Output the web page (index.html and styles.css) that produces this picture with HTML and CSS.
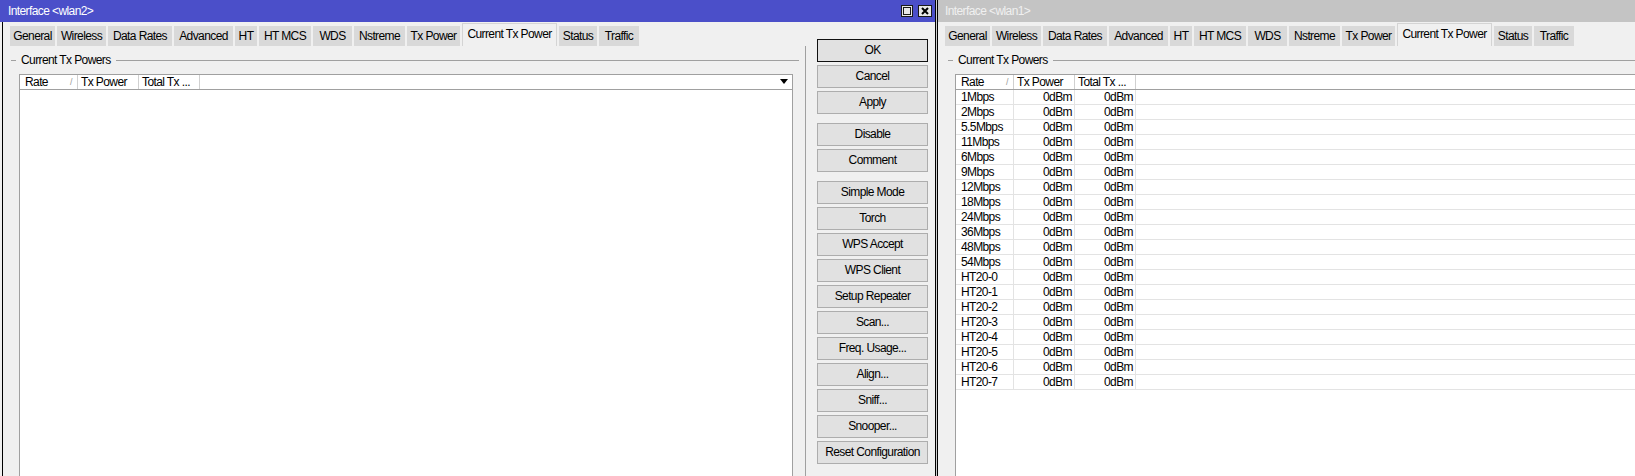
FILE: index.html
```html
<!DOCTYPE html>
<html>
<head>
<meta charset="utf-8">
<title>Interface</title>
<link rel="stylesheet" href="styles.css">
</head>
<body>
<div class="desk">
  <section class="win win-main">
    <header class="titlebar">
      <span class="title">Interface &lt;wlan2&gt;</span>
      <span class="wctl">
        <svg class="wbtn" width="12" height="12" viewBox="0 0 12 12"><rect x="0.5" y="0.5" width="11" height="11" fill="#e8e8e8" stroke="#1a1a1a"/><rect x="2.5" y="2.5" width="7" height="7" fill="none" stroke="#1a1a1a"/></svg>
        <svg class="wbtn" width="14" height="12" viewBox="0 0 14 12"><rect x="0.5" y="0.5" width="13" height="11" fill="#e8e8e8" stroke="#1a1a1a"/><path d="M4 3 L10 9 M10 3 L4 9" stroke="#000" stroke-width="2"/></svg>
      </span>
    </header>
    <div class="wbody">
      <div class="main">
        <nav class="tabs">
          <span class="tab t-gen">General</span>
          <span class="tab t-wir">Wireless</span>
          <span class="tab t-dr">Data Rates</span>
          <span class="tab t-adv">Advanced</span>
          <span class="tab t-ht">HT</span>
          <span class="tab t-mcs">HT MCS</span>
          <span class="tab t-wds">WDS</span>
          <span class="tab t-nst">Nstreme</span>
          <span class="tab t-txp">Tx Power</span>
          <span class="tab t-cur active">Current Tx Power</span>
          <span class="tab t-sta">Status</span>
          <span class="tab t-tra">Traffic</span>
        </nav>
        <div class="panel">
          <div class="group"><span class="dash"></span><span class="glabel">Current Tx Powers</span><span class="gline"></span></div>
          <div class="list">
            <div class="lrow lhead">
              <div class="cell c-rate">Rate<span class="sort">/</span></div>
              <div class="cell c-tx">Tx Power</div>
              <div class="cell c-tot">Total Tx ...</div>
              <div class="cell c-fill"><span class="dd"></span></div>
            </div>
          </div>
        </div>
      </div>
      <div class="buttons">
        <div class="btn def">OK</div>
        <div class="btn">Cancel</div>
        <div class="btn">Apply</div>
        <div class="btn sep">Disable</div>
        <div class="btn">Comment</div>
        <div class="btn sep">Simple Mode</div>
        <div class="btn">Torch</div>
        <div class="btn">WPS Accept</div>
        <div class="btn">WPS Client</div>
        <div class="btn">Setup Repeater</div>
        <div class="btn">Scan...</div>
        <div class="btn">Freq. Usage...</div>
        <div class="btn">Align...</div>
        <div class="btn">Sniff...</div>
        <div class="btn">Snooper...</div>
        <div class="btn">Reset Configuration</div>
      </div>
    </div>
  </section>
  <div class="win-gap"></div>
  <section class="win win-side">
    <header class="titlebar">
      <span class="title">Interface &lt;wlan1&gt;</span>
    </header>
    <div class="wbody">
      <div class="main">
        <nav class="tabs">
          <span class="tab t-gen">General</span>
          <span class="tab t-wir">Wireless</span>
          <span class="tab t-dr">Data Rates</span>
          <span class="tab t-adv">Advanced</span>
          <span class="tab t-ht">HT</span>
          <span class="tab t-mcs">HT MCS</span>
          <span class="tab t-wds">WDS</span>
          <span class="tab t-nst">Nstreme</span>
          <span class="tab t-txp">Tx Power</span>
          <span class="tab t-cur active">Current Tx Power</span>
          <span class="tab t-sta">Status</span>
          <span class="tab t-tra">Traffic</span>
        </nav>
        <div class="panel">
          <div class="group"><span class="dash"></span><span class="glabel">Current Tx Powers</span><span class="gline"></span></div>
          <div class="list">
            <div class="lrow lhead">
              <div class="cell c-rate">Rate<span class="sort">/</span></div>
              <div class="cell c-tx">Tx Power</div>
              <div class="cell c-tot">Total Tx ...</div>
              <div class="cell c-fill"></div>
            </div>
            <div class="lrow"><div class="cell c-rate">1Mbps</div><div class="cell c-tx num">0dBm</div><div class="cell c-tot num">0dBm</div><div class="cell c-fill"></div></div>
            <div class="lrow"><div class="cell c-rate">2Mbps</div><div class="cell c-tx num">0dBm</div><div class="cell c-tot num">0dBm</div><div class="cell c-fill"></div></div>
            <div class="lrow"><div class="cell c-rate">5.5Mbps</div><div class="cell c-tx num">0dBm</div><div class="cell c-tot num">0dBm</div><div class="cell c-fill"></div></div>
            <div class="lrow"><div class="cell c-rate">11Mbps</div><div class="cell c-tx num">0dBm</div><div class="cell c-tot num">0dBm</div><div class="cell c-fill"></div></div>
            <div class="lrow"><div class="cell c-rate">6Mbps</div><div class="cell c-tx num">0dBm</div><div class="cell c-tot num">0dBm</div><div class="cell c-fill"></div></div>
            <div class="lrow"><div class="cell c-rate">9Mbps</div><div class="cell c-tx num">0dBm</div><div class="cell c-tot num">0dBm</div><div class="cell c-fill"></div></div>
            <div class="lrow"><div class="cell c-rate">12Mbps</div><div class="cell c-tx num">0dBm</div><div class="cell c-tot num">0dBm</div><div class="cell c-fill"></div></div>
            <div class="lrow"><div class="cell c-rate">18Mbps</div><div class="cell c-tx num">0dBm</div><div class="cell c-tot num">0dBm</div><div class="cell c-fill"></div></div>
            <div class="lrow"><div class="cell c-rate">24Mbps</div><div class="cell c-tx num">0dBm</div><div class="cell c-tot num">0dBm</div><div class="cell c-fill"></div></div>
            <div class="lrow"><div class="cell c-rate">36Mbps</div><div class="cell c-tx num">0dBm</div><div class="cell c-tot num">0dBm</div><div class="cell c-fill"></div></div>
            <div class="lrow"><div class="cell c-rate">48Mbps</div><div class="cell c-tx num">0dBm</div><div class="cell c-tot num">0dBm</div><div class="cell c-fill"></div></div>
            <div class="lrow"><div class="cell c-rate">54Mbps</div><div class="cell c-tx num">0dBm</div><div class="cell c-tot num">0dBm</div><div class="cell c-fill"></div></div>
            <div class="lrow"><div class="cell c-rate">HT20-0</div><div class="cell c-tx num">0dBm</div><div class="cell c-tot num">0dBm</div><div class="cell c-fill"></div></div>
            <div class="lrow"><div class="cell c-rate">HT20-1</div><div class="cell c-tx num">0dBm</div><div class="cell c-tot num">0dBm</div><div class="cell c-fill"></div></div>
            <div class="lrow"><div class="cell c-rate">HT20-2</div><div class="cell c-tx num">0dBm</div><div class="cell c-tot num">0dBm</div><div class="cell c-fill"></div></div>
            <div class="lrow"><div class="cell c-rate">HT20-3</div><div class="cell c-tx num">0dBm</div><div class="cell c-tot num">0dBm</div><div class="cell c-fill"></div></div>
            <div class="lrow"><div class="cell c-rate">HT20-4</div><div class="cell c-tx num">0dBm</div><div class="cell c-tot num">0dBm</div><div class="cell c-fill"></div></div>
            <div class="lrow"><div class="cell c-rate">HT20-5</div><div class="cell c-tx num">0dBm</div><div class="cell c-tot num">0dBm</div><div class="cell c-fill"></div></div>
            <div class="lrow"><div class="cell c-rate">HT20-6</div><div class="cell c-tx num">0dBm</div><div class="cell c-tot num">0dBm</div><div class="cell c-fill"></div></div>
            <div class="lrow"><div class="cell c-rate">HT20-7</div><div class="cell c-tx num">0dBm</div><div class="cell c-tot num">0dBm</div><div class="cell c-fill"></div></div>
          </div>
        </div>
      </div>
    </div>
  </section>
</div>
</body>
</html>
```

FILE: styles.css
```css
* { box-sizing: border-box; }
html, body { margin: 0; padding: 0; }
body {
  width: 1635px;
  height: 476px;
  overflow: hidden;
  background: #f0f0f0;
  font-family: "Liberation Sans", Arial, sans-serif;
  font-size: 12px;
  letter-spacing: -0.6px;
  color: #000;
}
.desk { display: flex; height: 476px; }
.win { display: flex; flex-direction: column; height: 100%; background: #f0f0f0; }
.win-main { width: 936px; flex: none; border-right: 1px solid #000; }
.win-gap { width: 1px; flex: none; background: #cfcfcf; }
.win-side { flex: 1; min-width: 0; border-left: 1px solid #000; }

.titlebar {
  height: 22px;
  flex: none;
  display: flex;
  align-items: center;
  justify-content: space-between;
  white-space: nowrap;
}
.win-main .titlebar { background: #4b4fc9; color: #fff; padding: 0 3px 0 8px; }
.win-side .titlebar { background: #c4c4c4; color: #f0f0f0; padding-left: 7px; }
.wctl { display: flex; gap: 5px; align-items: center; }
.wbtn { display: block; }

.wbody { flex: 1; display: flex; min-height: 0; }
.win-main .wbody { margin-left: 2px; border-left: 1px solid #000; }

.main { width: 803px; flex: none; display: flex; flex-direction: column; }
.win-side .main { flex: 1; width: auto; min-width: 0; }

.tabs { display: flex; gap: 2px; height: 24px; flex: none; padding-left: 7px; align-items: flex-end; }
.tab {
  height: 20px;
  line-height: 21px;
  background: #d9d9d9;
  text-align: center;
  white-space: nowrap;
  flex: none;
}
.tab.active { height: 23px; line-height: 20px; background: #f0f0f0; border: 1px solid #d4d4d4; border-bottom: none; }
.t-gen { width: 45px; }
.t-wir { width: 49px; }
.t-dr { width: 64px; }
.t-adv { width: 59px; }
.t-ht { width: 22px; }
.t-mcs { width: 52px; }
.t-wds { width: 39px; }
.t-nst { width: 51px; }
.t-txp { width: 53px; }
.t-cur { width: 95px; }
.t-sta { width: 38px; }
.t-tra { width: 40px; }

.panel { flex: 1; display: flex; flex-direction: column; min-height: 0; }
.win-main .panel { border-right: 1px solid #a0a0a0; }

.group { display: flex; align-items: center; height: 14px; margin: 7px 6px 0 8px; flex: none; }
.win-side .group { margin-right: 0; margin-left: 10px; }
.dash { width: 5px; height: 1px; background: #a0a0a0; flex: none; }
.glabel { margin: 0 5px; white-space: nowrap; }
.gline { flex: 1; height: 1px; background: #a0a0a0; }

.list {
  flex: 1;
  margin: 7px 12px 0 16px;
  border: 1px solid #a0a0a0;
  border-bottom: none;
  background: #fff;
  overflow: hidden;
}
.win-side .list { margin-right: 0; margin-left: 17px; border-right: none; }

.lrow { display: flex; height: 15px; line-height: 14px; border-bottom: 1px solid #e3e3e3; }
.lhead { border-bottom-color: #a0a0a0; }
.cell { flex: none; padding: 0 3px; border-right: 1px solid #e3e3e3; white-space: nowrap; overflow: hidden; }
.lhead .cell { border-right-color: #d0d0d0; }
.c-rate { width: 58px; padding-left: 5px; }
.c-tx { width: 61px; }
.c-tot { width: 61px; }
.num { text-align: right; padding-right: 2px; }
.c-fill { flex: 1; border-right: none; position: relative; }
.sort { float: right; margin-right: 2px; color: #9a9a9a; font-size: 9px; }
.dd {
  position: absolute;
  right: 4px;
  top: 4px;
  width: 0;
  height: 0;
  border-left: 4px solid transparent;
  border-right: 4px solid transparent;
  border-top: 5px solid #000;
}

.buttons { width: 111px; flex: none; margin-left: 11px; padding-top: 17px; display: flex; flex-direction: column; }
.btn {
  height: 23px;
  flex: none;
  margin-bottom: 3px;
  background: #e1e1e1;
  border: 1px solid #adadad;
  text-align: center;
  line-height: 21px;
  white-space: nowrap;
}
.btn.def { border-color: #111; }
.btn.sep { margin-top: 6px; }
```
